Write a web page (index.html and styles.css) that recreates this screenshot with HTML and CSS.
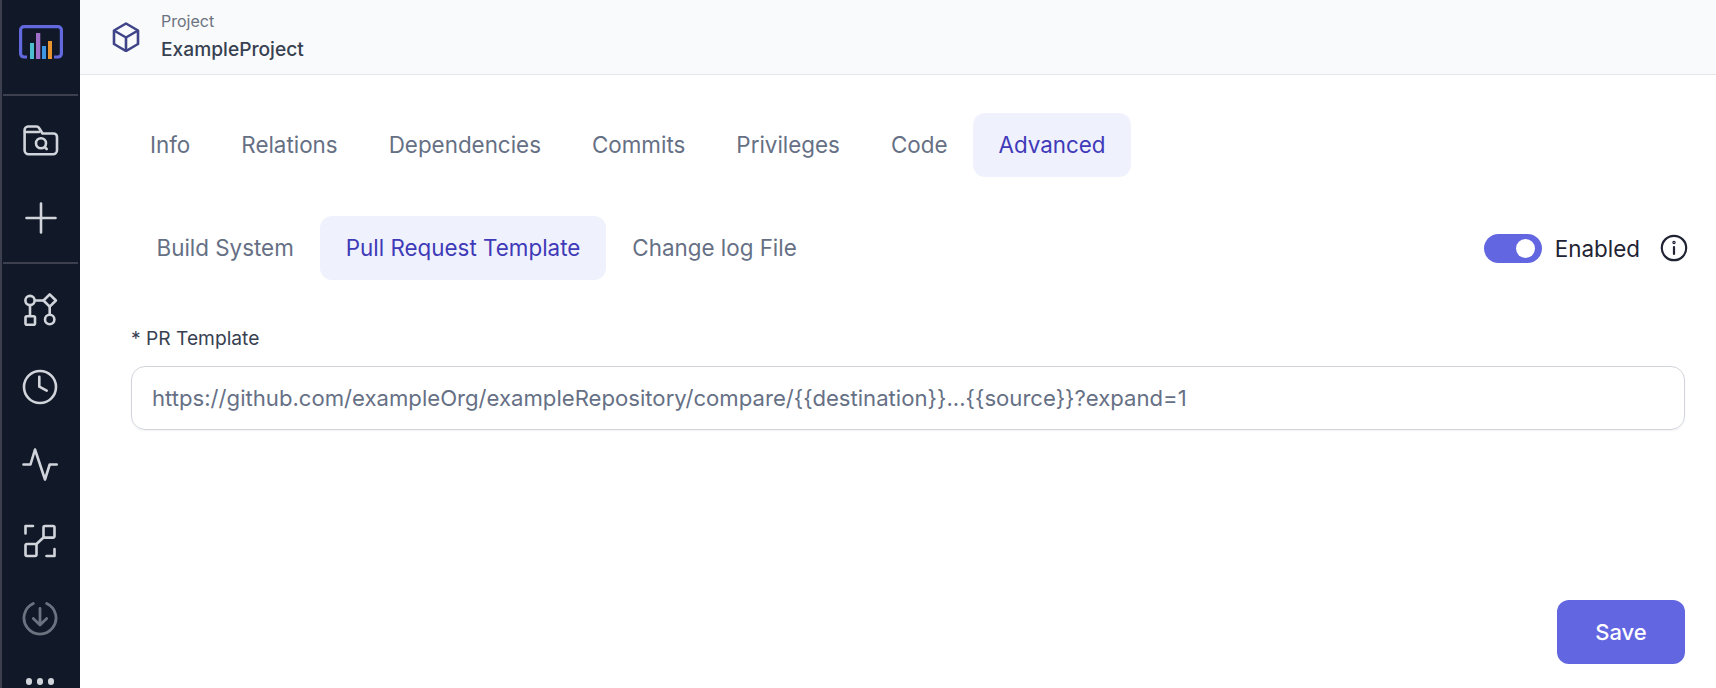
FILE: index.html
```html
<!DOCTYPE html>
<html lang="en">
<head>
<meta charset="utf-8">
<title>ExampleProject - Advanced</title>
<link rel="stylesheet" href="styles.css">
</head>
<body>
<div class="app">
	<nav class="sidebar">
		<div class="side-logo">
			<svg width="44" height="34" viewBox="0 0 44 34" fill="none">
				<path d="M8 32H5a3.400 3.400 0 0 1-3.400-3.400V5A3.400 3.400 0 0 1 5 1.600h34A3.400 3.400 0 0 1 42.400 5v23.600A3.400 3.400 0 0 1 39 32h-4" stroke="#6269df" stroke-width="3.200"/>
				<rect x="11" y="18" width="4" height="16" fill="#4fbdd0"/>
				<rect x="17" y="8" width="4.300" height="26" fill="#a06fc9"/>
				<rect x="23" y="21" width="4" height="13" fill="#3f97e4"/>
				<rect x="29" y="16" width="4" height="18" fill="#e8952f"/>
			</svg>
		</div>
		<div class="side-group side-group-top">
			<a class="side-icon" href="#">
				<svg width="36" height="36" viewBox="0 0 36 36" fill="none" stroke="#d1d5db" stroke-width="2.600" stroke-linecap="round" stroke-linejoin="round">
					<path d="M1.600 8a3.500 3.500 0 0 1 3.400-3.500h8.500a3 3 0 0 1 2.600 1.500l3.400 5.500h11a3.500 3.500 0 0 1 3.500 3.500v13.200a4 4 0 0 1-4 4H5.600a4 4 0 0 1-4-4z"/>
					<path d="M2 10h14"/>
					<circle cx="18" cy="21.300" r="5"/>
					<path d="M22 25.300l1.700 1.700"/>
				</svg>
			</a>
			<a class="side-icon" href="#">
				<svg width="36" height="36" viewBox="0 0 36 36" fill="none" stroke="#d1d5db" stroke-width="2.600" stroke-linecap="round">
					<path d="M18 3.500v29M3.500 18h29"/>
				</svg>
			</a>
		</div>
		<div class="side-group">
			<a class="side-icon" href="#">
				<svg width="36" height="36" viewBox="0 0 36 36" fill="none" stroke="#d1d5db" stroke-width="2.600" stroke-linejoin="round">
					<circle cx="8" cy="8.500" r="4.600"/>
					<path d="M27.700 2.300l6.200 6.200-6.200 6.200-6.200-6.200z"/>
					<path d="M12.600 8.500h8.900M8 13.100v11.100M27.700 14.700v8.100"/>
					<rect x="3.500" y="24.200" width="9.500" height="8.500" rx="1.500"/>
					<circle cx="27.700" cy="27.500" r="4.700"/>
				</svg>
			</a>
			<a class="side-icon" href="#">
				<svg width="36" height="36" viewBox="0 0 36 36" fill="none" stroke="#d1d5db" stroke-width="2.600" stroke-linecap="round" stroke-linejoin="round">
					<circle cx="18" cy="18" r="16"/>
					<path d="M17.300 7.700v10l7.400 4"/>
				</svg>
			</a>
			<a class="side-icon" href="#">
				<svg width="36" height="36" viewBox="0 0 36 36" fill="none" stroke="#d1d5db" stroke-width="2.600" stroke-linecap="round" stroke-linejoin="round">
					<path d="M1.500 18.500h7L13 3.500l10 30 4.700-15h7"/>
				</svg>
			</a>
			<a class="side-icon" href="#">
				<svg width="36" height="36" viewBox="0 0 36 36" fill="none" stroke="#d1d5db" stroke-width="2.600" stroke-linecap="round" stroke-linejoin="round">
					<path d="M11 3H3.500v7.500M32.500 26v7H24.500"/>
					<rect x="21.500" y="3" width="11" height="11.600" rx="1.500"/>
					<rect x="3.500" y="21" width="11" height="12" rx="1.500"/>
					<path d="M14.500 21l7-6.500"/>
				</svg>
			</a>
			<a class="side-icon" href="#">
				<svg width="36" height="36" viewBox="0 0 36 36" fill="none" stroke="#6b7280" stroke-width="2.800" stroke-linecap="round" stroke-linejoin="round">
					<path d="M11.300 3.500A16 16 0 1 0 24.700 3.500"/>
					<path d="M18 8.500V25M11.300 18.500L18 25l6.700-6.500"/>
				</svg>
			</a>
			<div class="side-more"><span></span><span></span><span></span></div>
		</div>
	</nav>
	<div class="main">
		<header class="topbar">
			<svg class="cube" width="30" height="30" viewBox="0 0 30 30" fill="none" stroke="#3f4489" stroke-width="2.600" stroke-linejoin="round">
				<path d="M15 1.500l12 7v13.500l-12 7-12-7V8.500z"/>
				<path d="M3 8.500l12 7 12-7M15 15.500V29"/>
			</svg>
			<div class="crumb">
				<div class="crumb-label">Project</div>
				<div class="crumb-name">ExampleProject</div>
			</div>
		</header>
		<div class="content">
			<div class="tabs tabs-main">
				<a class="tab" href="#">Info</a>
				<a class="tab" href="#">Relations</a>
				<a class="tab" href="#">Dependencies</a>
				<a class="tab" href="#">Commits</a>
				<a class="tab" href="#">Privileges</a>
				<a class="tab" href="#">Code</a>
				<a class="tab active" href="#">Advanced</a>
			</div>
			<div class="subrow">
				<div class="tabs tabs-sub">
					<a class="tab" href="#">Build System</a>
					<a class="tab active" href="#">Pull Request Template</a>
					<a class="tab" href="#">Change log File</a>
				</div>
				<div class="enabled">
					<span class="toggle"><span class="knob"></span></span>
					<span class="enabled-text">Enabled</span>
					<svg class="info" width="28" height="28" viewBox="0 0 28 28" fill="none" stroke="#1f2333" stroke-width="2.200" stroke-linecap="round">
						<circle cx="14" cy="14" r="12.200"/>
						<path d="M14 13v7"/>
						<circle cx="14" cy="8.500" r="0.600"/>
					</svg>
				</div>
			</div>
			<label class="field-label">* PR Template</label>
			<div class="field">https://github.com/exampleOrg/exampleRepository/compare/{{destination}}...{{source}}?expand=1</div>
			<div class="actions"><button class="save">Save</button></div>
		</div>
	</div>
</div>
</body>
</html>
```

FILE: styles.css
```css
html, body {
	margin: 0;
	padding: 0;
	height: 100%;
	background: #ffffff;
	overflow: hidden;
}
body, button {
	font-family: Inter, "Liberation Sans", sans-serif;
}
a {
	text-decoration: none;
}
.app {
	display: flex;
	height: 688px;
}

.sidebar {
	width: 80px;
	flex-shrink: 0;
	background: #111827;
	box-shadow: inset 2px 0 0 #3c404e;
	display: flex;
	flex-direction: column;
	overflow: hidden;
}
.side-logo {
	height: 96px;
	display: flex;
	justify-content: center;
	padding-top: 25px;
	box-sizing: border-box;
	margin: 0 2px 0 3px;
	border-bottom: 2px solid #3c404e;
	flex-shrink: 0;
}
.side-group {
	display: flex;
	flex-direction: column;
	align-items: center;
	gap: 41px;
	padding-top: 27.500px;
}
.side-group-top {
	height: 168px;
	box-sizing: border-box;
	padding-top: 26px;
	gap: 41.500px;
	margin: 0 2px 0 3px;
	border-bottom: 2px solid #3c404e;
	flex-shrink: 0;
}
.side-icon {
	display: block;
	width: 36px;
	height: 36px;
}
.side-more {
	display: flex;
	gap: 4.500px;
	margin-top: 1.500px;
}
.side-more span {
	width: 6.500px;
	height: 6.500px;
	border-radius: 50%;
	background: #d1d5db;
}

.main {
	flex: 1;
	display: flex;
	flex-direction: column;
	min-width: 0;
}
.topbar {
	height: 75px;
	box-sizing: border-box;
	background: #f9fafb;
	border-bottom: 1px solid #e5e7eb;
	display: flex;
	align-items: center;
	padding-left: 31px;
	gap: 20px;
}
.crumb-label {
	font-size: 16px;
	line-height: 20px;
	color: #6b7280;
	margin-top: -3px;
}
.crumb-name {
	font-size: 19.200px;
	line-height: 24px;
	font-weight: 500;
	color: #374151;
	margin-top: 6px;
}

.content {
	flex: 1;
	display: flex;
	flex-direction: column;
	padding: 38px 31px 24px 51px;
	min-height: 0;
}
.tabs {
	display: flex;
	gap: 0;
}
.tabs-main {
	margin-left: -6.500px;
}
.tabs-sub {
	gap: 1px;
}
.tab {
	display: block;
	padding: 0 25.500px;
	height: 64px;
	line-height: 64px;
	border-radius: 12px;
	font-size: 22.400px;
	color: #667085;
	white-space: nowrap;
}
.tab.active {
	background: #eff1fd;
	color: #3f3ab8;
}
.subrow {
	display: flex;
	align-items: center;
	justify-content: space-between;
	margin-top: 39px;
}
.enabled {
	display: flex;
	align-items: center;
}
.toggle {
	width: 58px;
	height: 29px;
	border-radius: 15px;
	background: #6366e1;
	position: relative;
	display: block;
}
.knob {
	position: absolute;
	top: 5px;
	right: 7px;
	width: 19px;
	height: 19px;
	border-radius: 50%;
	background: #ffffff;
}
.enabled-text {
	font-size: 22.400px;
	color: #1f2333;
	margin-left: 12.500px;
}
.info {
	margin-left: 20px;
	margin-right: -3px;
}
.field-label {
	display: block;
	margin-top: 46px;
	font-size: 19.200px;
	line-height: 24px;
	color: #374151;
}
.field {
	margin-top: 16px;
	height: 64px;
	box-sizing: border-box;
	border: 1px solid #d1d5db;
	border-radius: 14px;
	box-shadow: 0 1px 2px rgba(0, 0, 0, 0.05);
	padding: 0 20px;
	line-height: 62px;
	font-size: 22.140px;
	color: #667085;
	white-space: nowrap;
}
.actions {
	margin-top: auto;
	display: flex;
	justify-content: flex-end;
}
.save {
	width: 128px;
	height: 64px;
	border: 0;
	border-radius: 12px;
	background: #6366e1;
	color: #ffffff;
	font-size: 22px;
	font-weight: 500;
}
```
